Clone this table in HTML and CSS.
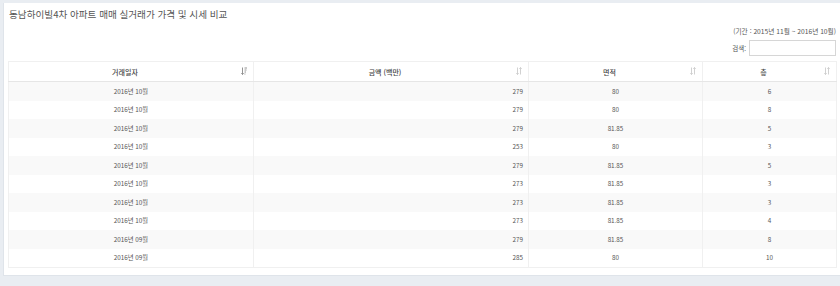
FILE: index.html
```html
<!DOCTYPE html>
<html lang="ko">
<head>
<meta charset="utf-8">
<link rel="stylesheet" href="styles.css">
</head>
<body>
<div class="panel">
  <h1 class="title">동남하이빌4차 아파트 매매 실거래가 가격 및 시세 비교</h1>
  <div class="period">(기간 : 2015년 11월 ~ 2016년 10월)</div>
  <div class="search"><label class="search-label">검색:</label><input class="search-input" type="text"></div>
  <table class="grid">
    <colgroup>
      <col class="c1"><col class="c2"><col class="c3"><col class="c4">
    </colgroup>
    <thead>
      <tr>
        <th>거래일자<svg class="sort active" viewBox="0 0 6 8" width="6" height="8"><path d="M1.5 0.5V7.5M0.3 6.2L1.5 7.5L2.7 6.2" fill="none" stroke="#888" stroke-width="0.9"/><path d="M3.5 1H6M3.5 3H5.5M3.5 5H5M3.5 7H4.4" stroke="#888" stroke-width="0.9"/></svg></th>
        <th>금액 (백만)<svg class="sort" viewBox="0 0 6 8" width="6" height="8"><path d="M1.5 0.5V7.5M0.3 6.2L1.5 7.5L2.7 6.2M4.5 7.5V0.5M3.3 1.8L4.5 0.5L5.7 1.8" fill="none" stroke="#ccc" stroke-width="0.9"/></svg></th>
        <th>면적<svg class="sort" viewBox="0 0 6 8" width="6" height="8"><path d="M1.5 0.5V7.5M0.3 6.2L1.5 7.5L2.7 6.2M4.5 7.5V0.5M3.3 1.8L4.5 0.5L5.7 1.8" fill="none" stroke="#ccc" stroke-width="0.9"/></svg></th>
        <th>층<svg class="sort" viewBox="0 0 6 8" width="6" height="8"><path d="M1.5 0.5V7.5M0.3 6.2L1.5 7.5L2.7 6.2M4.5 7.5V0.5M3.3 1.8L4.5 0.5L5.7 1.8" fill="none" stroke="#ccc" stroke-width="0.9"/></svg></th>
      </tr>
    </thead>
    <tbody>
      <tr><td>2016년 10월</td><td class="num">279</td><td>80</td><td>6</td></tr>
      <tr><td>2016년 10월</td><td class="num">279</td><td>80</td><td>8</td></tr>
      <tr><td>2016년 10월</td><td class="num">279</td><td>81.85</td><td>5</td></tr>
      <tr><td>2016년 10월</td><td class="num">253</td><td>80</td><td>3</td></tr>
      <tr><td>2016년 10월</td><td class="num">279</td><td>81.85</td><td>5</td></tr>
      <tr><td>2016년 10월</td><td class="num">273</td><td>81.85</td><td>3</td></tr>
      <tr><td>2016년 10월</td><td class="num">273</td><td>81.85</td><td>3</td></tr>
      <tr><td>2016년 10월</td><td class="num">273</td><td>81.85</td><td>4</td></tr>
      <tr><td>2016년 09월</td><td class="num">279</td><td>81.85</td><td>8</td></tr>
      <tr><td>2016년 09월</td><td class="num">285</td><td>80</td><td>10</td></tr>
    </tbody>
  </table>
</div>
</body>
</html>
```
FILE: styles.css
```css
html, body {
  margin: 0;
  padding: 0;
}
body {
  background: #e9edf2;
  font-family: "Noto Sans CJK KR", "Noto Sans", sans-serif;
  color: #555;
  height: 286px;
  overflow: hidden;
}
.panel {
  margin: 3px 0 0 3px;
  background: #fff;
  border-left: 1px solid #dfe4ea;
  border-bottom: 1px solid #dfe4ea;
  padding: 5px 4px 7px 4px;
}
.title {
  margin: 0 0 0 1px;
  font-size: 9.6px;
  font-weight: normal;
  line-height: 12px;
  color: #555;
}
.period {
  text-align: right;
  font-size: 6.7px;
  line-height: 9px;
  margin-top: 7px;
  color: #555;
}
.search {
  display: flex;
  justify-content: flex-end;
  align-items: center;
  gap: 3px;
  margin-top: 4px;
}
.search-label {
  font-size: 6.5px;
  color: #555;
}
.search-input {
  width: 87px;
  height: 16px;
  box-sizing: border-box;
  border: 1px solid #d6d6d6;
  padding: 0;
  margin: 0;
}
.grid {
  margin-top: 5px;
  width: 828px;
  border-collapse: collapse;
  table-layout: fixed;
  border: 1px solid #f0f0f0;
}
.c1 { width: 245px; }
.c2 { width: 275px; }
.c3 { width: 174px; }
.c4 { width: 134px; }
.grid th {
  position: relative;
  height: 19px;
  padding: 0 12px 0 0;
  font-size: 7px;
  font-weight: 500;
  color: #444;
  text-align: center;
  border-left: 1px solid #f0f0f0;
  border-bottom: 1px solid #e6e6e6;
}
.sort {
  position: absolute;
  right: 6px;
  top: 5px;
}
.grid td {
  height: 18.5px;
  padding: 0;
  font-size: 6.3px;
  text-align: center;
  color: #555;
  border-left: 1px solid #f0f0f0;
}
.grid td.num {
  text-align: right;
  padding-right: 5px;
}
.grid tbody tr:nth-child(odd) td {
  background: #f9f9f9;
}
```
